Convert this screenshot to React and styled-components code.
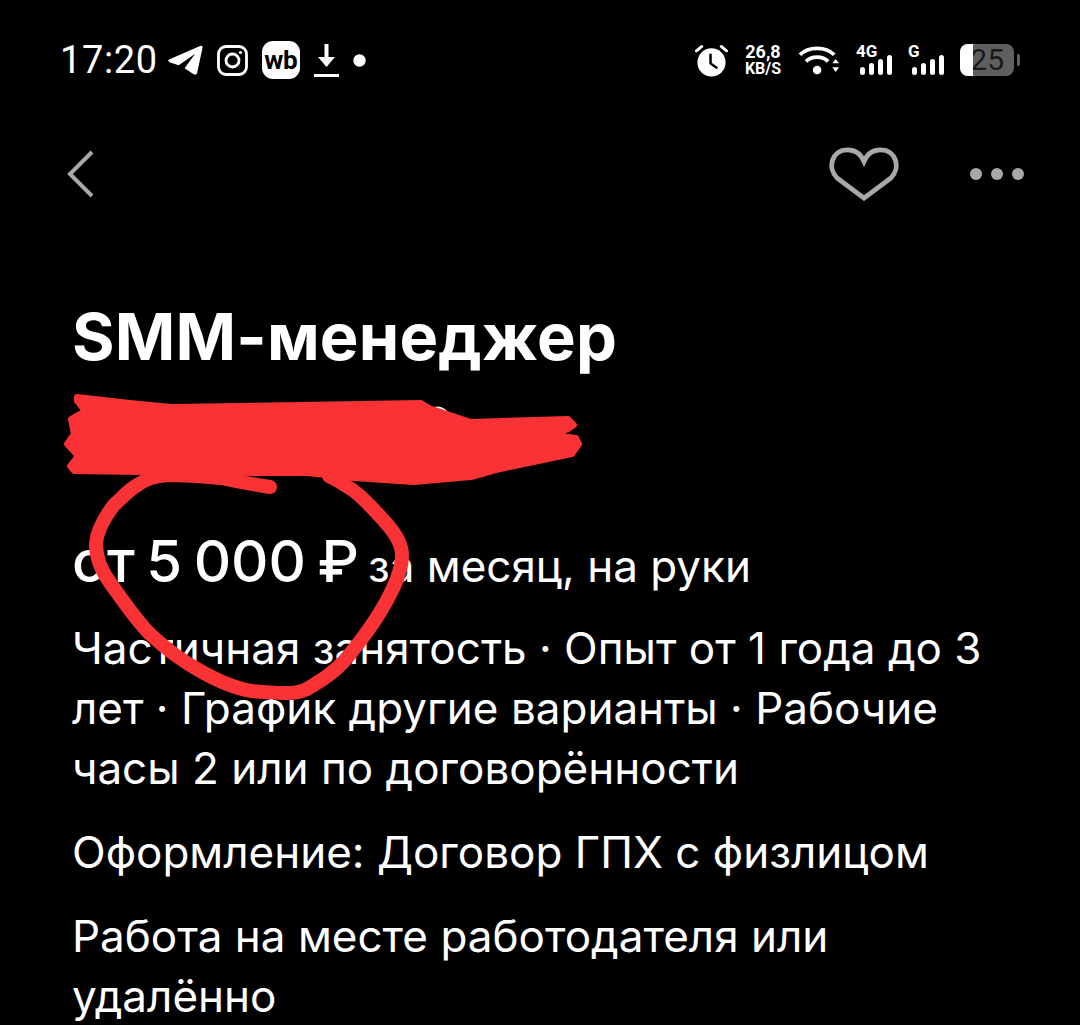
import React from 'react';
import styled, { createGlobalStyle } from 'styled-components';

const GlobalStyle = createGlobalStyle`
  html, body {
    margin: 0;
    background: #000;
    overflow: hidden;
  }
`;

const Page = styled.div`
  position: relative;
  width: 1080px;
  height: 1025px;
  overflow: hidden;
  background: #000;
  color: #fff;
  font-family: Inter, 'Liberation Sans', sans-serif;
`;

const StatusBar = styled.div`
  display: flex;
  justify-content: space-between;
  align-items: center;
  height: 48px;
  padding: 36px 60px 0 60px;
`;

const StatusGroup = styled.div`
  display: flex;
  align-items: center;
  gap: ${(p) => p.$gap || 0}px;
`;

const Time = styled.span`
  font-family: Roboto, sans-serif;
  font-size: 38px;
  letter-spacing: 0.6px;
  line-height: 48px;
  margin-right: -4px;
`;

const WbBadge = styled.span`
  display: flex;
  align-items: center;
  justify-content: center;
  width: 38px;
  height: 38px;
  border-radius: 11px;
  background: #fff;
  color: #000;
  font-family: Roboto, sans-serif;
  font-weight: 700;
  font-size: 26px;
  letter-spacing: -0.5px;
`;

const Speed = styled.div`
  display: flex;
  flex-direction: column;
  align-items: center;
  width: 38px;
  font-family: Roboto, sans-serif;
  font-weight: 700;
  white-space: nowrap;
`;

const SpeedLine = styled.span`
  display: block;
  font-size: ${(p) => p.$size}px;
  line-height: ${(p) => p.$size}px;
`;

const Signal = styled.div`
  position: relative;
  width: 36px;
  height: 32px;
`;

const SignalLabel = styled.span`
  position: absolute;
  left: 0;
  top: -1px;
  font-family: Roboto, sans-serif;
  font-weight: 700;
  font-size: 17px;
  line-height: 17px;
`;

const Battery = styled.div`
  position: relative;
  width: 54px;
  height: 32px;
  border-radius: 8px;
  background: #5f5f5f;
  color: #1a1a1a;
  font-family: Roboto, sans-serif;
  font-size: 30px;
  line-height: 32px;
  text-align: right;
  padding-right: 10px;
  box-sizing: border-box;
`;

const BatteryFill = styled.span`
  position: absolute;
  left: 0;
  top: 0;
  bottom: 0;
  width: 13px;
  border-radius: 8px 0 0 8px;
  background: #fff;
`;

const BatteryCap = styled.span`
  width: 3px;
  height: 12px;
  margin-left: 3px;
  border-radius: 0 2px 2px 0;
  background: #5f5f5f;
`;

const NavBar = styled.div`
  display: flex;
  justify-content: space-between;
  align-items: center;
  height: 60px;
  margin-top: 60px;
  padding: 0 56px 0 66px;
`;

const NavActions = styled.div`
  display: flex;
  align-items: center;
  gap: 70px;
`;

const Content = styled.div`
  padding: 0 72px;
  margin-top: 99px;
`;

const Title = styled.h1`
  margin: 0;
  font-size: 65px;
  line-height: 68px;
  font-weight: 700;
  letter-spacing: 0.2px;
  white-space: nowrap;
`;

const Company = styled.div`
  height: 68px;
  margin-top: 12px;
`;

const Salary = styled.div`
  display: flex;
  align-items: baseline;
  gap: 9px;
  margin-top: 80px;
  white-space: nowrap;
`;

const SalaryValue = styled.span`
  font-size: 58px;
  line-height: 60px;
  font-weight: 500;
  word-spacing: -4px;
`;

const SalaryNote = styled.span`
  font-size: 44px;
  line-height: 60px;
`;

const Paragraph = styled.p`
  margin: ${(p) => p.$top}px 0 0;
  font-size: 44px;
  line-height: 60px;
`;

const Scribble = styled.svg`
  position: absolute;
  left: 0;
  top: 0;
  pointer-events: none;
`;

const Telegram = () => (
  <svg width="35" height="31" viewBox="0 0 36 32" fill="#fff">
    <path d="M1 15 L33 1 Q36 0 35.500 3 L30 29 Q29 32 26 30 L17 24 L28 9 L11 21 L2 18 Q-1 16 1 15 Z" />
  </svg>
);

const Instagram = () => (
  <svg width="31" height="31" viewBox="0 0 31 31" fill="none" stroke="#fff" strokeWidth="2.800">
    <rect x="1.500" y="1.500" width="28" height="28" rx="7.500" />
    <circle cx="15.500" cy="15.500" r="6.500" />
    <circle cx="23.500" cy="7.500" r="1.600" fill="#fff" stroke="none" />
  </svg>
);

const DownloadIcon = () => (
  <svg width="25" height="33" viewBox="0 0 25 33" fill="#fff">
    <rect x="10.500" y="0" width="4" height="16" />
    <path d="M4 13 H21 L12.500 23 Z" />
    <rect x="0" y="30" width="25" height="3" />
  </svg>
);

const Dot = () => (
  <svg width="13" height="13" viewBox="0 0 13 13" fill="#fff">
    <circle cx="6.500" cy="6.500" r="6.200" />
  </svg>
);

const AlarmIcon = () => (
  <svg width="33" height="33" viewBox="0 0 34 34">
    <circle cx="17" cy="19" r="14.500" fill="#fff" />
    <path d="M16 10 V20 L23 25" fill="none" stroke="#000" strokeWidth="2.600" />
    <path d="M1.500 7 L7 2.500 M32.500 7 L27 2.500" stroke="#fff" strokeWidth="3" strokeLinecap="round" />
  </svg>
);

const WifiIcon = () => (
  <svg width="42" height="31" viewBox="0 0 44 32" fill="none" stroke="#fff" strokeWidth="4">
    <path d="M2 10 C11 1 29 1 38 10" />
    <path d="M8.500 17 C14 11 26 11 31.500 17" />
    <circle cx="20" cy="26" r="4.500" fill="#fff" stroke="none" />
    <path d="M36 19 L39.500 14.500 L43 19 Z M36 23 L43 23 L39.500 28 Z" fill="#fff" stroke="none" />
  </svg>
);

const SignalBars = () => (
  <svg width="36" height="32" viewBox="0 0 36 32" fill="#fff">
    <rect x="4" y="23" width="5" height="8" rx="2.500" />
    <rect x="13" y="19" width="5" height="12" rx="2.500" />
    <rect x="22" y="15" width="5" height="16" rx="2.500" />
    <rect x="31" y="11" width="5" height="20" rx="2.500" />
  </svg>
);

const BackIcon = () => (
  <svg width="28" height="50" viewBox="0 0 28 50" fill="none" stroke="#a8a8a8" strokeWidth="4">
    <path d="M26 3 L4 25 L26 47" />
  </svg>
);

const HeartIcon = () => (
  <svg width="72" height="54" viewBox="0 0 72 56" fill="none" stroke="#a8a8a8" strokeWidth="5">
    <path d="M36 53 L8 32 C-2 22 2 3 19 3 C27 3 33 8 36 15 C39 8 45 3 53 3 C70 3 74 22 64 32 Z" />
  </svg>
);

const MoreIcon = () => (
  <svg width="54" height="14" viewBox="0 0 54 14" fill="#a8a8a8">
    <circle cx="6" cy="7" r="6" />
    <circle cx="27" cy="7" r="6" />
    <circle cx="48" cy="7" r="6" />
  </svg>
);

const App = () => (
  <Page>
    <GlobalStyle />
    <StatusBar>
      <StatusGroup $gap={14}>
        <Time>17:20</Time>
        <Telegram />
        <Instagram />
        <WbBadge>wb</WbBadge>
        <DownloadIcon />
        <Dot />
      </StatusGroup>
      <StatusGroup $gap={16}>
        <AlarmIcon />
        <Speed>
          <SpeedLine $size={18}>26,8</SpeedLine>
          <SpeedLine $size={16}>KB/S</SpeedLine>
        </Speed>
        <WifiIcon />
        <Signal>
          <SignalLabel>4G</SignalLabel>
          <SignalBars />
        </Signal>
        <Signal>
          <SignalLabel>G</SignalLabel>
          <SignalBars />
        </Signal>
        <StatusGroup>
          <Battery>
            <BatteryFill />
            25
          </Battery>
          <BatteryCap />
        </StatusGroup>
      </StatusGroup>
    </StatusBar>

    <NavBar>
      <BackIcon />
      <NavActions>
        <HeartIcon />
        <MoreIcon />
      </NavActions>
    </NavBar>

    <Content>
      <Title>SMM-менеджер</Title>
      <Company />
      <Salary>
        <SalaryValue>от 5 000 ₽</SalaryValue>
        <SalaryNote>за месяц, на руки</SalaryNote>
      </Salary>
      <Paragraph $top={22}>
        Частичная занятость · Опыт от 1 года до 3 лет · График другие варианты · Рабочие часы 2 или по договорённости
      </Paragraph>
      <Paragraph $top={24}>Оформление: Договор ГПХ с физлицом</Paragraph>
      <Paragraph $top={24}>Работа на месте работодателя или удалённо</Paragraph>
    </Content>

    <Scribble width="1080" height="1025" viewBox="0 0 1080 1025">
      <path d="M430 412 Q440 404 450 418" fill="none" stroke="#fff" strokeWidth="5" />
      <path
        fill="none"
        stroke="#f93235"
        strokeWidth="14"
        strokeLinecap="round"
        strokeLinejoin="round"
        d="M270 487 C250 484 235 481 221 478 C200 476 185 475 168 475 C155 476 147 478 139 484 C128 490 122 498 114 505 C104 518 97 530 96 544 C96 558 102 572 111 584 C124 602 136 620 150 634 C168 651 185 663 204 673 C224 684 244 692 264 692 C280 693 295 695 307 689 C322 680 335 672 346 659 C360 642 372 626 382 609 C392 592 402 573 402 555 C402 543 395 533 386 523 C376 512 366 500 354 491 C345 485 338 480 329 476"
      />
      <path
        fill="#f93235"
        stroke="#f93235"
        strokeWidth="6"
        strokeLinejoin="round"
        d="M77 397 L130 403 L171 407 L421 403 L429 408 L471 422 L568 419 L574 425 L568 429 L554 435 L576 438 L579 444 L572 454 L496 470 L471 477 L414 482 L354 478 L307 473 L264 473 L139 472 L74 471 L70 466 L78 456 L67 444 L74 434 L71 419 L85 411 L77 401 Z"
      />
    </Scribble>
  </Page>
);

export default App;
